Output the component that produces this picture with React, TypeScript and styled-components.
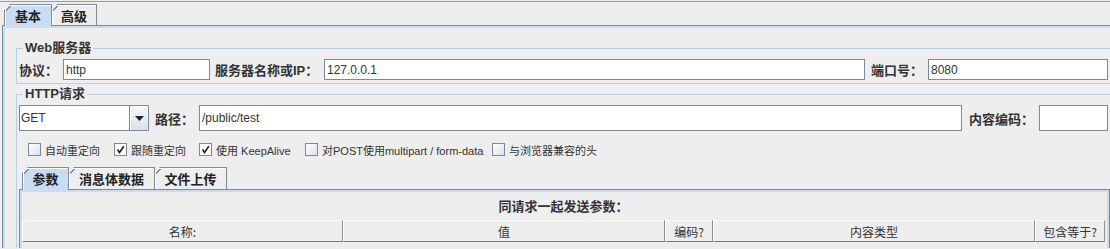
import styled, { createGlobalStyle } from "styled-components";

const GlobalStyle = createGlobalStyle`
  html, body {
    margin: 0;
    padding: 0;
    background: #eeeeee;
    overflow: hidden;
  }

  body {
    font-family: "Liberation Sans", "Noto Sans CJK SC", sans-serif;
    font-size: 12px;
    color: #333333;
  }
`;

const BORDER = "#7a8a99";
const BAND = "#c8ddf2";

const Frame = styled.div`
  width: 1130px;
  height: 248px;
  margin-top: 1px;
  border-top: 1px solid #9a9a9a;
  padding: 2px 0 0 2px;
  box-sizing: border-box;
  overflow: hidden;
`;

const TabStrip = styled.div<{ $inset: number }>`
  display: flex;
  align-items: flex-end;
  padding-left: ${(p) => p.$inset}px;
  position: relative;
  z-index: 1;
`;

const Tab = styled.div<{ $w: number; $h: number; $active?: boolean }>`
  width: ${(p) => p.$w}px;
  height: ${(p) => (p.$active ? p.$h + 1 : p.$h)}px;
  margin-bottom: ${(p) => (p.$active ? -1 : 0)}px;
  box-sizing: border-box;
  border: 1px solid ${BORDER};
  border-bottom: none;
  margin-right: -1px;
  clip-path: polygon(6px 0, 100% 0, 100% 100%, 0 100%, 0 6px);
  background: linear-gradient(
    135deg,
    transparent 4.2px,
    ${BORDER} 4.2px,
    ${BORDER} 5.2px,
    ${(p) => (p.$active ? BAND : "#eeeeee")} 5.2px
  );
  box-shadow: inset 1px 1px 0 #ffffff;
  display: flex;
  align-items: center;
  justify-content: center;
  font-family: "Noto Sans CJK SC", sans-serif;
  font-size: 13px;
  font-weight: 700;
  color: #222222;
  line-height: 1;
  padding-bottom: ${(p) => (p.$active ? 1 : 0)}px;
`;

const TabPane = styled.div`
  border-top: 1px solid ${BORDER};
  border-left: 1px solid ${BORDER};
  box-shadow: inset 2px 2px 0 ${BAND};
  height: 223px;
  padding: 15px 0 0 13px;
  box-sizing: border-box;
  overflow: hidden;
`;

const Group = styled.fieldset<{ $pb: number }>`
  margin: 0;
  padding: 4px 0 ${(p) => p.$pb}px 2px;
  border: 1px solid #b8cfe5;
  border-right: none;
  min-width: 0;

  & + & {
    margin-top: 3px;
  }
`;

const Legend = styled.legend`
  margin-left: 4px;
  padding: 0 2px;
  font-family: "Liberation Sans", "Noto Sans CJK SC", sans-serif;
  font-size: 13px;
  font-weight: 700;
  line-height: 14px;
  color: #333333;
`;

const Row = styled.div<{ $h: number }>`
  display: flex;
  align-items: center;
  height: ${(p) => p.$h}px;
`;

const Label = styled.span<{ $w: number; $pl?: number }>`
  width: ${(p) => p.$w}px;
  padding-left: ${(p) => p.$pl ?? 0}px;
  box-sizing: border-box;
  flex: none;
  white-space: nowrap;
  font-family: "Liberation Sans", "Noto Sans CJK SC", sans-serif;
  font-size: 13px;
  font-weight: 700;
  color: #333333;
`;

const Field = styled.div<{ $w: number }>`
  width: ${(p) => p.$w}px;
  height: 100%;
  flex: none;
  box-sizing: border-box;
  border: 1px solid ${BORDER};
  background: #ffffff;
  padding-left: 2px;
  display: flex;
  align-items: center;
  font-size: 12px;
  color: #333333;
`;

const Combo = styled.div`
  width: 130px;
  height: 100%;
  flex: none;
  box-sizing: border-box;
  border: 1px solid ${BORDER};
  background: #ffffff;
  display: flex;
`;

const ComboText = styled.div`
  flex: 1;
  display: flex;
  align-items: center;
  padding-left: 1px;
  font-size: 12px;
  color: #333333;
`;

const ComboButton = styled.div`
  width: 18px;
  border-left: 1px solid ${BORDER};
  background: linear-gradient(#f6f9fc, #d6e2ee);
  box-shadow: inset 1px 1px 0 #ffffff;
  display: flex;
  align-items: center;
  justify-content: center;
`;

const CheckRow = styled.div`
  display: flex;
  align-items: center;
  height: 13px;
  margin-top: 12px;
  padding-left: 9px;
`;

const CheckItem = styled.div<{ $w?: number }>`
  display: flex;
  align-items: center;
  flex: none;
  width: ${(p) => (p.$w ? `${p.$w}px` : "auto")};
`;

const Box = styled.div<{ $checked?: boolean }>`
  width: 13px;
  height: 13px;
  box-sizing: border-box;
  border: 1px solid ${BORDER};
  background: ${(p) =>
    p.$checked ? "#ffffff" : "linear-gradient(135deg, #ffffff, #d4e1ee)"};
  margin-right: 4px;
  display: flex;
  align-items: center;
  justify-content: center;
`;

const CheckText = styled.span`
  font-family: "Liberation Sans", "Noto Sans CJK SC", sans-serif;
  font-size: 11px;
  color: #333333;
  white-space: nowrap;
`;

const Inner = styled.div`
  margin-top: 11px;
`;

const InnerPane = styled.div`
  width: 1091px;
  height: 80px;
  box-sizing: border-box;
  border: 1px solid ${BORDER};
  border-bottom: none;
  box-shadow: inset 2px 2px 0 ${BAND}, inset -2px 0 0 ${BAND};
  padding: 10px 0 0 2px;
`;

const PaneTitle = styled.div`
  text-align: center;
  font-size: 13px;
  font-weight: 700;
  line-height: 14px;
  color: #333333;
  padding-right: 4px;
`;

const Header = styled.div`
  display: flex;
  margin-top: 6px;
  height: 22px;
`;

const HeadCell = styled.div<{ $w: number }>`
  width: ${(p) => p.$w}px;
  flex: none;
  box-sizing: border-box;
  border-top: 1px solid #ffffff;
  border-left: 1px solid #ffffff;
  border-right: 1px solid #8e8e8e;
  border-bottom: 1px solid #7a7a7a;
  display: flex;
  align-items: center;
  justify-content: center;
  font-family: "Noto Sans CJK SC", sans-serif;
  font-size: 12px;
  color: #333333;
`;

const CheckMark = () => (
  <svg width="9" height="9" viewBox="0 0 9 9">
    <path d="M1.5 4.5 L3.5 7.5 L7.8 1.2" fill="none" stroke="#222" strokeWidth="1.6" />
  </svg>
);

const options = [
  { text: "自动重定向", checked: false, w: 86 },
  { text: "跟随重定向", checked: true, w: 85 },
  { text: "使用 KeepAlive", checked: true, w: 106 },
  { text: "对POST使用multipart / form-data", checked: false, w: 187 },
  { text: "与浏览器兼容的头", checked: false },
];

const columns = [
  { title: "名称:", w: 321 },
  { title: "值", w: 322 },
  { title: "编码?", w: 48 },
  { title: "内容类型", w: 322 },
  { title: "包含等于?", w: 70 },
];

function App() {
  return (
    <>
      <GlobalStyle />
      <Frame>
        <TabStrip $inset={2}>
          <Tab $w={48} $h={21} $active>
            基本
          </Tab>
          <Tab $w={46} $h={21}>
            高级
          </Tab>
        </TabStrip>

        <TabPane>
          <Group $pb={3}>
            <Legend>Web服务器</Legend>
            <Row $h={21}>
              <Label $w={44}>协议：</Label>
              <Field $w={147}>http</Field>
              <Label $w={114} $pl={5}>
                服务器名称或IP：
              </Label>
              <Field $w={541}>127.0.0.1</Field>
              <Label $w={63} $pl={6}>
                端口号：
              </Label>
              <Field $w={180}>8080</Field>
            </Row>
          </Group>

          <Group $pb={40}>
            <Legend>HTTP请求</Legend>
            <Row $h={26}>
              <Combo>
                <ComboText>GET</ComboText>
                <ComboButton>
                  <svg width="9" height="5" viewBox="0 0 9 5">
                    <polygon points="0,0 9,0 4.5,5" fill="#222" />
                  </svg>
                </ComboButton>
              </Combo>
              <Label $w={50} $pl={6}>
                路径：
              </Label>
              <Field $w={763}>/public/test</Field>
              <Label $w={77} $pl={7}>
                内容编码：
              </Label>
              <Field $w={69} />
            </Row>

            <CheckRow>
              {options.map((o) => (
                <CheckItem key={o.text} $w={o.w}>
                  <Box $checked={o.checked}>{o.checked && <CheckMark />}</Box>
                  <CheckText>{o.text}</CheckText>
                </CheckItem>
              ))}
            </CheckRow>

            <Inner>
              <TabStrip $inset={3}>
                <Tab $w={47} $h={22} $active>
                  参数
                </Tab>
                <Tab $w={87} $h={22}>
                  消息体数据
                </Tab>
                <Tab $w={73} $h={22}>
                  文件上传
                </Tab>
              </TabStrip>
              <InnerPane>
                <PaneTitle>同请求一起发送参数：</PaneTitle>
                <Header>
                  {columns.map((c) => (
                    <HeadCell key={c.title} $w={c.w}>
                      {c.title}
                    </HeadCell>
                  ))}
                </Header>
              </InnerPane>
            </Inner>
          </Group>
        </TabPane>
      </Frame>
    </>
  );
}

export default App;
